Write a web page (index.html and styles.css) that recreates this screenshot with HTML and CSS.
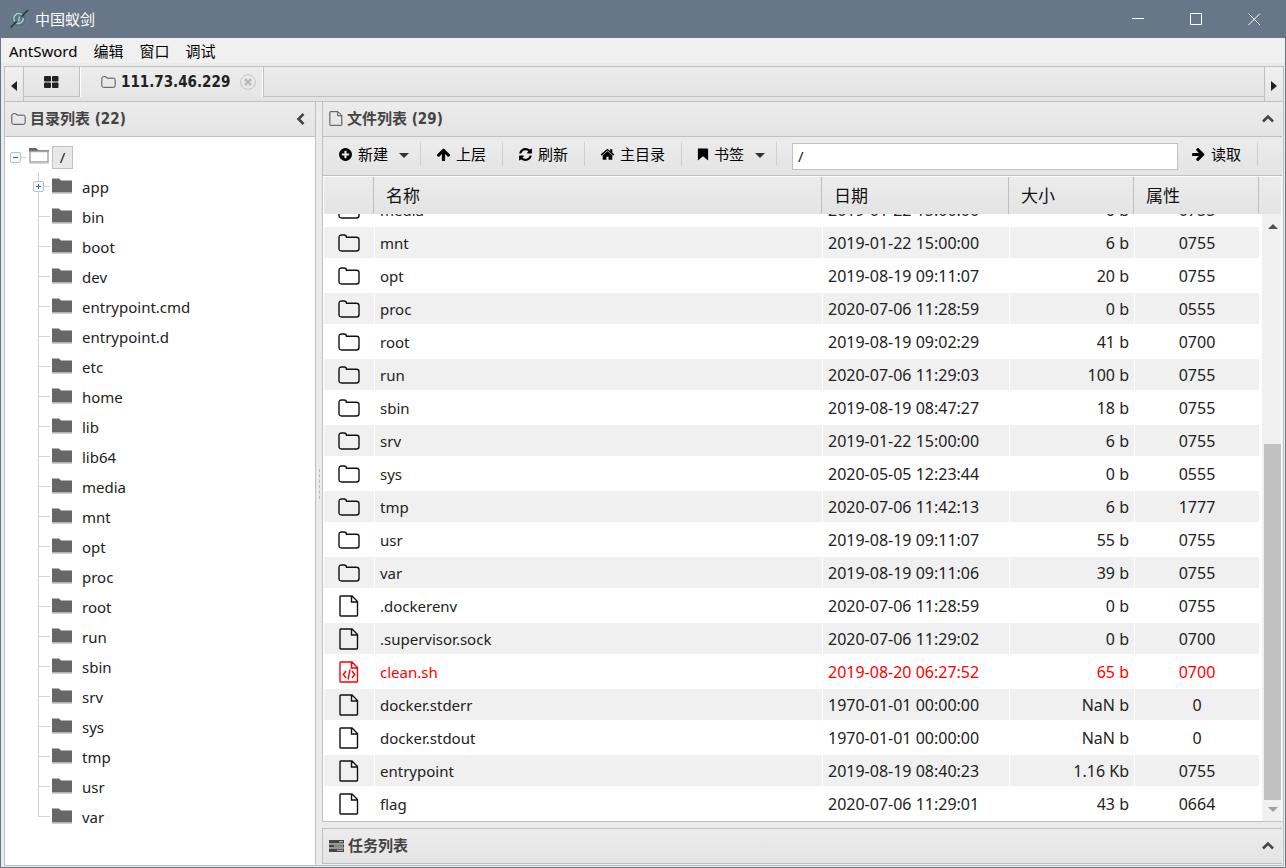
FILE: index.html
```html
<!DOCTYPE html>
<html lang="zh-CN">
<head>
<meta charset="utf-8">
<meta name="viewport" content="width=device-width, initial-scale=1">
<title>中国蚁剑</title>
<link rel="stylesheet" href="styles.css">
</head>
<body>
<svg class="sprite" aria-hidden="true">
  <symbol id="folder-o" viewBox="0 0 22 18"><path d="M1 3.500Q1 1 3.500 1H6Q8.500 1 8.500 3.200H18.500Q21 3.200 21 5.700V14.500Q21 17 18.500 17H3.500Q1 17 1 14.500Z" fill="none" stroke="currentColor" stroke-width="1.400"/></symbol>
  <symbol id="file-o" viewBox="0 0 20 22"><path d="M1.700 1H13L18.500 6.500V20.300Q18.500 21 17.800 21H1.700Q1 21 1 20.300V1.700Q1 1 1.700 1ZM12.500 1V7H18.500" fill="none" stroke="currentColor" stroke-width="1.400"/></symbol>
  <symbol id="file-code" viewBox="0 0 20 22"><path d="M1.700 1H13L18.500 6.500V20.300Q18.500 21 17.800 21H1.700Q1 21 1 20.300V1.700Q1 1 1.700 1ZM12.500 1V7H18.500M7 10L4.300 13.500L7 17M13 10L15.700 13.500L13 17M11 8.500L9 18.500" fill="none" stroke="currentColor" stroke-width="1.400"/></symbol>
  <symbol id="folder" viewBox="0 0 20 16"><path d="M0 0.500H7L9 2.500H20V14.500H0Z" fill="#666"/><path d="M0 15.500H20" stroke="#d0d0d0"/></symbol>
  <symbol id="folder-open" viewBox="0 0 20 16"><path d="M0 0H7L9 2H20V4H0Z" fill="#888"/><path d="M0 0H7L9 2V4H0Z" fill="#666"/><path d="M1 3.500H19V14H1Z" fill="#fff" stroke="#a6a6a6" stroke-width="1.500"/><path d="M0 15.500H20" stroke="#ddd"/></symbol>
  <symbol id="plus-circle" viewBox="0 0 1792 1792"><path fill="currentColor" d="M1344 960v-128q0-26-19-45t-45-19h-256v-256q0-26-19-45t-45-19h-128q-26 0-45 19t-19 45v256h-256q-26 0-45 19t-19 45v128q0 26 19 45t45 19h256v256q0 26 19 45t45 19h128q26 0 45-19t19-45v-256h256q26 0 45-19t19-45zm320-64q0 209-103 385.500t-279.500 279.500-385.500 103-385.500-103-279.500-279.500-103-385.500 103-385.500 279.500-279.500 385.500-103 385.500 103 279.500 279.500 103 385.500z"/></symbol>
  <symbol id="arrow-up" viewBox="0 0 1792 1792"><path fill="currentColor" d="M1675 971q0 51-37 90l-75 75q-38 38-91 38-54 0-90-38l-294-293v704q0 52-37.500 84.500t-90.500 32.500h-128q-53 0-90.500-32.500t-37.500-84.500v-704l-294 293q-36 38-90 38t-90-38l-75-75q-38-38-38-90 0-53 38-91l651-651q35-37 90-37 54 0 91 37l651 651q37 39 37 91z"/></symbol>
  <symbol id="arrow-right" viewBox="0 0 1792 1792"><path fill="currentColor" transform="rotate(90 896 896)" d="M1675 971q0 51-37 90l-75 75q-38 38-91 38-54 0-90-38l-294-293v704q0 52-37.500 84.500t-90.500 32.500h-128q-53 0-90.500-32.500t-37.500-84.500v-704l-294 293q-36 38-90 38t-90-38l-75-75q-38-38-38-90 0-53 38-91l651-651q35-37 90-37 54 0 91 37l651 651q37 39 37 91z"/></symbol>
  <symbol id="refresh" viewBox="0 0 1792 1792"><path fill="currentColor" d="M1639 1056q0 5-1 7-64 268-268 434.500t-478 166.500q-146 0-282.500-55t-243.500-157l-129 129q-19 19-45 19t-45-19-19-45v-448q0-26 19-45t45-19h448q26 0 45 19t19 45-19 45l-137 137q71 66 161 102t187 36q134 0 250-65t186-179q11-17 53-117 8-23 30-23h192q13 0 22.500 9.500t9.500 22.500zm25-800v448q0 26-19 45t-45 19h-448q-26 0-45-19t-19-45 19-45l138-138q-148-137-349-137-134 0-250 65t-186 179q-11 17-53 117-8 23-30 23h-199q-13 0-22.500-9.500t-9.500-22.500v-7q65-268 270-434.500t480-166.500q146 0 284 55.500t245 156.500l130-129q19-19 45-19t45 19 19 45z"/></symbol>
  <symbol id="home" viewBox="0 0 1792 1792"><path fill="currentColor" d="M1472 992v480q0 26-19 45t-45 19h-384v-384h-256v384h-384q-26 0-45-19t-19-45v-480q0-1 .5-3t.5-3l575-474 575 474q1 2 1 6zm223-69l-62 74q-8 9-21 11h-3q-13 0-21-7l-692-577-692 577q-12 8-24 7-13-2-21-11l-62-74q-8-10-7-23.500t11-21.500l719-599q32-26 76-26t76 26l244 204v-195q0-14 9-23t23-9h192q14 0 23 9t9 23v408l219 182q10 8 11 21.500t-7 23.500z"/></symbol>
  <symbol id="bookmark" viewBox="0 0 12 14"><path fill="currentColor" d="M1 0.500H10.500Q11.500 0.500 11.500 1.500V13.500L6 9L0.500 13.500V1.500Q0.500 0.500 1 0.500Z"/></symbol>
  <symbol id="caret-down" viewBox="0 0 10 5"><path fill="currentColor" d="M0 0H10L5 5Z"/></symbol>
  <symbol id="caret-left" viewBox="0 0 6 10"><path fill="currentColor" d="M6 0V10L0 5Z"/></symbol>
  <symbol id="caret-right" viewBox="0 0 6 10"><path fill="currentColor" d="M0 0V10L6 5Z"/></symbol>
  <symbol id="chevron-up" viewBox="0 0 12 12"><path d="M1 8.500L6 3.500L11 8.500" fill="none" stroke="currentColor" stroke-width="2.600"/></symbol>
  <symbol id="chevron-left" viewBox="0 0 12 12"><path d="M8.500 1L3.500 6L8.500 11" fill="none" stroke="currentColor" stroke-width="2.600"/></symbol>
</svg>
<div class="window">
  <header class="titlebar">
    <svg class="logo" viewBox="0 0 20 20" aria-hidden="true"><circle cx="10" cy="10" r="8.500" fill="#567481" stroke="#6c8894"/><path d="M13.500 6.500A4.800 4.800 0 1 0 6.500 13M7.500 14.200A5 5 0 0 0 14.200 9M10.500 7.500L9.500 12.500" fill="none" stroke="#b4c4c9" stroke-width="1.500"/><path d="M19 1L12.500 7.500M7.500 12.500L1.500 18.500" stroke="#2a3238" stroke-width="1.600"/></svg>
    <h1 class="title">中国蚁剑</h1>
    <button class="winbtn" aria-label="最小化"><svg viewBox="0 0 13 13"><path d="M0 5.500H12"/></svg></button>
    <button class="winbtn" aria-label="最大化"><svg viewBox="0 0 13 13"><path d="M0.500 0.500H11.500V11.500H0.500Z"/></svg></button>
    <button class="winbtn" aria-label="关闭"><svg viewBox="0 0 13 13"><path d="M0.500 0.500L12 12M12 0.500L0.500 12"/></svg></button>
  </header>
  <nav class="menubar">
    <button>AntSword</button><button>编辑</button><button>窗口</button><button>调试</button>
  </nav>
  <div class="frame">
    <div class="tabbar">
      <button class="tabarrow prev" aria-label="向左"><svg><use href="#caret-left"/></svg></button>
      <div class="tabs">
        <button class="tab hometab" aria-label="主页"><svg viewBox="0 0 15 12"><path fill="#222" d="M1 0H6Q7 0 7 1V4.500Q7 5.500 6 5.500H1Q0 5.500 0 4.500V1Q0 0 1 0ZM9 0H13.500Q14.500 0 14.500 1V4.500Q14.500 5.500 13.500 5.500H9Q8 5.500 8 4.500V1Q8 0 9 0ZM1 6.500H6Q7 6.500 7 7.500V11Q7 12 6 12H1Q0 12 0 11V7.500Q0 6.500 1 6.500ZM9 6.500H13.500Q14.500 6.500 14.500 7.500V11Q14.500 12 13.500 12H9Q8 12 8 11V7.500Q8 6.500 9 6.500Z"/></svg></button>
        <div class="tab active">
          <svg class="small-folder"><use href="#folder-o"/></svg>
          <span class="tabname">111.73.46.229</span>
          <button class="close" aria-label="关闭标签"><svg viewBox="0 0 16 16"><circle cx="8" cy="8" r="7.400" fill="none" stroke="#c4c4c4"/><path d="M5 5L11 11M11 5L5 11" stroke="#bdbdbd" stroke-width="2.600"/></svg></button>
        </div>
      </div>
      <button class="tabarrow next" aria-label="向右"><svg><use href="#caret-right"/></svg></button>
    </div>
    <main class="content">
      <aside class="sidebar">
        <div class="panelhead">
          <svg class="small-folder"><use href="#folder-o"/></svg>
          <h2>目录列表 (22)</h2>
          <button class="fold" aria-label="折叠目录"><svg><use href="#chevron-left"/></svg></button>
        </div>
        <div class="tree">
          <div class="node root"><button class="toggle" aria-label="收起"></button><svg class="fold-icon"><use href="#folder-open"/></svg><span class="label">/</span></div>
          <ul>
            <li class="node"><button class="toggle plus" aria-label="展开"></button><svg class="fold-icon"><use href="#folder"/></svg><span>app</span></li>
            <li class="node"><svg class="fold-icon"><use href="#folder"/></svg><span>bin</span></li>
            <li class="node"><svg class="fold-icon"><use href="#folder"/></svg><span>boot</span></li>
            <li class="node"><svg class="fold-icon"><use href="#folder"/></svg><span>dev</span></li>
            <li class="node"><svg class="fold-icon"><use href="#folder"/></svg><span>entrypoint.cmd</span></li>
            <li class="node"><svg class="fold-icon"><use href="#folder"/></svg><span>entrypoint.d</span></li>
            <li class="node"><svg class="fold-icon"><use href="#folder"/></svg><span>etc</span></li>
            <li class="node"><svg class="fold-icon"><use href="#folder"/></svg><span>home</span></li>
            <li class="node"><svg class="fold-icon"><use href="#folder"/></svg><span>lib</span></li>
            <li class="node"><svg class="fold-icon"><use href="#folder"/></svg><span>lib64</span></li>
            <li class="node"><svg class="fold-icon"><use href="#folder"/></svg><span>media</span></li>
            <li class="node"><svg class="fold-icon"><use href="#folder"/></svg><span>mnt</span></li>
            <li class="node"><svg class="fold-icon"><use href="#folder"/></svg><span>opt</span></li>
            <li class="node"><svg class="fold-icon"><use href="#folder"/></svg><span>proc</span></li>
            <li class="node"><svg class="fold-icon"><use href="#folder"/></svg><span>root</span></li>
            <li class="node"><svg class="fold-icon"><use href="#folder"/></svg><span>run</span></li>
            <li class="node"><svg class="fold-icon"><use href="#folder"/></svg><span>sbin</span></li>
            <li class="node"><svg class="fold-icon"><use href="#folder"/></svg><span>srv</span></li>
            <li class="node"><svg class="fold-icon"><use href="#folder"/></svg><span>sys</span></li>
            <li class="node"><svg class="fold-icon"><use href="#folder"/></svg><span>tmp</span></li>
            <li class="node"><svg class="fold-icon"><use href="#folder"/></svg><span>usr</span></li>
            <li class="node"><svg class="fold-icon"><use href="#folder"/></svg><span>var</span></li>
          </ul>
        </div>
      </aside>
      <div class="splitter"><span></span></div>
      <div class="right">
        <section class="files">
          <div class="panelhead">
            <svg class="small-file"><use href="#file-o"/></svg>
            <h2>文件列表 (29)</h2>
            <button class="fold" aria-label="折叠文件"><svg><use href="#chevron-up"/></svg></button>
          </div>
          <div class="toolbar">
            <button class="tool"><svg><use href="#plus-circle"/></svg>新建<svg class="caret"><use href="#caret-down"/></svg></button>
            <button class="tool"><svg><use href="#arrow-up"/></svg>上层</button>
            <button class="tool"><svg><use href="#refresh"/></svg>刷新</button>
            <button class="tool"><svg><use href="#home"/></svg>主目录</button>
            <button class="tool"><svg class="mark"><use href="#bookmark"/></svg>书签<svg class="caret"><use href="#caret-down"/></svg></button>
            <input class="path" type="text" value="/" aria-label="路径">
            <button class="tool"><svg><use href="#arrow-right"/></svg>读取</button>
          </div>
          <div class="gridhead">
            <table>
              <colgroup><col class="c-icon"><col><col class="c-date"><col class="c-size"><col class="c-attr"></colgroup>
              <thead><tr><th></th><th>名称</th><th>日期</th><th>大小</th><th>属性</th></tr></thead>
            </table>
          </div>
          <div class="gridbody">
            <div class="rows">
              <table>
                <colgroup><col class="c-icon"><col><col class="c-date"><col class="c-size"><col class="c-attr"></colgroup>
                <tbody>
                  <tr><td><svg class="dir"><use href="#folder-o"/></svg></td><td>media</td><td>2019-01-22 15:00:00</td><td>6 b</td><td>0755</td></tr>
                  <tr><td><svg class="dir"><use href="#folder-o"/></svg></td><td>mnt</td><td>2019-01-22 15:00:00</td><td>6 b</td><td>0755</td></tr>
                  <tr><td><svg class="dir"><use href="#folder-o"/></svg></td><td>opt</td><td>2019-08-19 09:11:07</td><td>20 b</td><td>0755</td></tr>
                  <tr><td><svg class="dir"><use href="#folder-o"/></svg></td><td>proc</td><td>2020-07-06 11:28:59</td><td>0 b</td><td>0555</td></tr>
                  <tr><td><svg class="dir"><use href="#folder-o"/></svg></td><td>root</td><td>2019-08-19 09:02:29</td><td>41 b</td><td>0700</td></tr>
                  <tr><td><svg class="dir"><use href="#folder-o"/></svg></td><td>run</td><td>2020-07-06 11:29:03</td><td>100 b</td><td>0755</td></tr>
                  <tr><td><svg class="dir"><use href="#folder-o"/></svg></td><td>sbin</td><td>2019-08-19 08:47:27</td><td>18 b</td><td>0755</td></tr>
                  <tr><td><svg class="dir"><use href="#folder-o"/></svg></td><td>srv</td><td>2019-01-22 15:00:00</td><td>6 b</td><td>0755</td></tr>
                  <tr><td><svg class="dir"><use href="#folder-o"/></svg></td><td>sys</td><td>2020-05-05 12:23:44</td><td>0 b</td><td>0555</td></tr>
                  <tr><td><svg class="dir"><use href="#folder-o"/></svg></td><td>tmp</td><td>2020-07-06 11:42:13</td><td>6 b</td><td>1777</td></tr>
                  <tr><td><svg class="dir"><use href="#folder-o"/></svg></td><td>usr</td><td>2019-08-19 09:11:07</td><td>55 b</td><td>0755</td></tr>
                  <tr><td><svg class="dir"><use href="#folder-o"/></svg></td><td>var</td><td>2019-08-19 09:11:06</td><td>39 b</td><td>0755</td></tr>
                  <tr><td><svg class="doc"><use href="#file-o"/></svg></td><td>.dockerenv</td><td>2020-07-06 11:28:59</td><td>0 b</td><td>0755</td></tr>
                  <tr><td><svg class="doc"><use href="#file-o"/></svg></td><td>.supervisor.sock</td><td>2020-07-06 11:29:02</td><td>0 b</td><td>0700</td></tr>
                  <tr class="exec"><td><svg class="doc"><use href="#file-code"/></svg></td><td>clean.sh</td><td>2019-08-20 06:27:52</td><td>65 b</td><td>0700</td></tr>
                  <tr><td><svg class="doc"><use href="#file-o"/></svg></td><td>docker.stderr</td><td>1970-01-01 00:00:00</td><td>NaN b</td><td>0</td></tr>
                  <tr><td><svg class="doc"><use href="#file-o"/></svg></td><td>docker.stdout</td><td>1970-01-01 00:00:00</td><td>NaN b</td><td>0</td></tr>
                  <tr><td><svg class="doc"><use href="#file-o"/></svg></td><td>entrypoint</td><td>2019-08-19 08:40:23</td><td>1.16 Kb</td><td>0755</td></tr>
                  <tr><td><svg class="doc"><use href="#file-o"/></svg></td><td>flag</td><td>2020-07-06 11:29:01</td><td>43 b</td><td>0664</td></tr>
                </tbody>
              </table>
            </div>
            <div class="scrollbar" aria-hidden="true">
              <svg class="up" viewBox="0 0 10 5"><path d="M0 5H10L5 0Z"/></svg>
              <div class="track"><div class="thumb"></div></div>
              <svg class="down" viewBox="0 0 10 5"><path d="M0 0H10L5 5Z"/></svg>
            </div>
          </div>
        </section>
        <section class="tasks">
          <div class="panelhead">
            <svg class="tasks-icon" viewBox="0 0 15 12"><path d="M0 0H15V3.500H0ZM0 4.500H15V7.500H0ZM0 8.500H15V12H0Z" fill="#444"/><path d="M10 1.200H14V2.300H10ZM5 5.500H14V6.500H5ZM8 9.700H14V10.800H8Z" fill="#ccc"/></svg>
            <h2>任务列表</h2>
            <button class="fold" aria-label="展开任务"><svg><use href="#chevron-up"/></svg></button>
          </div>
        </section>
      </div>
    </main>
  </div>
</div>
</body>
</html>
```
FILE: styles.css
```css
* { box-sizing: border-box; }
body {
  margin: 0;
  font-family: "Noto Sans", "Noto Sans CJK SC", sans-serif;
  font-size: 16px;
  color: #222;
}
button { margin: 0; padding: 0; border: 0; background: none; font: inherit; color: inherit; }
svg { display: block; flex: none; }
h1, h2 { margin: 0; }
.sprite { position: absolute; width: 0; height: 0; }
.window {
  display: flex;
  flex-direction: column;
  min-height: 100vh;
  border: 1px solid #687689;
  border-top: 0;
  background: #ebebeb;
}
.titlebar { display: flex; align-items: center; height: 38px; padding: 0 2px 0 8px; background: #687689; color: #fff; }
.logo { width: 20px; height: 20px; }
.title { flex: 1; margin-left: 6px; font-size: 15px; font-weight: 400; line-height: 20px; }
.winbtn { display: grid; place-items: center; width: 58px; height: 38px; }
.winbtn svg { width: 13px; height: 13px; fill: none; stroke: #fff; }
.menubar { display: flex; gap: 16px; height: 25px; padding-left: 8px; background: #f0f0f0; color: #000; font-size: 15px; line-height: 26px; }
.frame { display: flex; flex-direction: column; flex: 1; margin: 3px 1px 1px 3px; border: 1px solid #c0c0c0; }

.tabbar { display: flex; height: 35px; border-bottom: 1px solid #c0c0c0; background: #e4e4e4; }
.tabarrow { display: flex; align-items: center; justify-content: center; flex: none; width: 19px; padding-top: 3px; background: linear-gradient(#f0f0f0, #e6e6e6); color: #222; }
.tabarrow svg { width: 6px; height: 10px; }
.tabarrow.prev { border-right: 1px solid #c0c0c0; }
.tabarrow.next { border-left: 1px solid #c0c0c0; }
.tabs { display: flex; flex: 1; height: 30px; border-bottom: 1px solid #c0c0c0; background: linear-gradient(#ececec, #e4e4e4); }
.tab { display: flex; align-items: center; height: 29px; border-right: 1px solid #c0c0c0; }
.hometab { justify-content: center; width: 56px; }
.hometab svg { width: 15px; height: 12px; }
.tab.active { height: 30px; padding: 0 7px 0 20px; border-left: 1px solid #fff; box-shadow: inset -1px 0 #fff; background: linear-gradient(#ececec, #e6e6e6); font-weight: 700; }
.small-folder { width: 15px; height: 12px; color: #444; }
.tabname { margin: 0 10px 0 5px; font-family: "DejaVu Sans Condensed", "DejaVu Sans", sans-serif; font-size: 15px; }
.close svg { width: 16px; height: 16px; }

.content { display: flex; flex: 1; }
.sidebar { display: flex; flex-direction: column; flex: none; width: 311px; border-right: 1px solid #c0c0c0; background: #fff; }
.panelhead { display: flex; align-items: center; height: 35px; padding: 0 8px 1px 6px; border-bottom: 1px solid #c0c0c0; background: linear-gradient(#ececec, #e4e4e4); color: #444; }
.panelhead h2 { flex: 1; margin-left: 4px; font-family: "DejaVu Sans Condensed", "Noto Sans CJK SC", sans-serif; font-size: 15px; font-weight: 700; line-height: 20px; }
.small-file { width: 14px; height: 15px; }
.fold svg { width: 12px; height: 12px; }
.tree { padding: 5px 0 0 5px; font-size: 15px; }
.node { display: flex; align-items: center; height: 30px; }
.toggle { position: relative; width: 11px; height: 11px; border: 1px solid #b4c4ce; border-radius: 2px; background: #f4f8fa; }
.toggle::before { content: ""; position: absolute; left: 2px; top: 4px; width: 5px; height: 1px; background: #3a6a80; }
.toggle.plus::after { content: ""; position: absolute; left: 4px; top: 2px; width: 1px; height: 5px; background: #3a6a80; }
.root::after { content: ""; order: 1; width: 5px; height: 1px; background: #d4d4d4; }
.root .fold-icon { order: 2; margin-left: 3px; }
.label { display: grid; order: 3; place-items: center; width: 21px; height: 23px; margin-left: 3px; border: 1px solid #c0c0c0; background: #e8e8e8; }
.fold-icon { width: 20px; height: 16px; margin-bottom: 2px; }
.tree ul { margin: 0; padding: 0 0 0 23px; list-style: none; }
.tree li { position: relative; padding-left: 19px; }
.tree li span { margin-left: 10px; }
.tree li::before { content: ""; position: absolute; left: 5px; top: 0; width: 1px; height: 30px; background: #d4d4d4; }
.tree li:last-child::before { height: 15px; }
.tree li::after { content: ""; position: absolute; left: 5px; top: 14px; width: 12px; height: 1px; background: #d4d4d4; }
.tree li .toggle { position: absolute; left: 0; top: 9px; z-index: 1; }
.splitter { display: grid; place-items: center; flex: none; width: 6px; }
.splitter span { height: 30px; border-left: 1px dashed #bbb; }

.right { display: flex; flex-direction: column; flex: 1; gap: 6px; min-width: 0; padding: 0 1px 1px 0; }
.files { display: flex; flex-direction: column; flex: 1; border-left: 1px solid #c0c0c0; border-bottom: 1px solid #c0c0c0; background: #fff; }
.toolbar { display: flex; align-items: center; height: 39px; padding: 0 24px 4px 0; border-bottom: 1px solid #c0c0c0; background: linear-gradient(#ececec, #e4e4e4); color: #000; font-size: 15px; }
.tool { display: flex; align-items: center; gap: 5px; height: 24px; padding: 0 16px 0 15px; border-right: 1px solid #c5d3da; line-height: 20px; white-space: nowrap; }
.tool svg { width: 15px; height: 15px; }
.tool .mark { width: 12px; height: 13px; }
.tool .caret { width: 10px; height: 5px; margin: 2px -5px 0 6px; color: #333; }
.path { flex: 1; min-width: 0; height: 27px; margin: 4px 0 0 15px; padding: 0 5px; border: 1px solid #c0c0c0; background: #fff; color: #222; font: inherit; }
.path + .tool { padding-left: 13px; }

table { width: 100%; border-collapse: separate; border-spacing: 0; table-layout: fixed; }
.c-icon { width: 50px; }
.c-date { width: 187px; }
.c-size, .c-attr { width: 125px; }
.gridhead { margin: 1px 1px 0; padding-right: 22px; background: linear-gradient(#ececec, #e4e4e4); }
th { height: 37px; padding: 0 12px; border-right: 1px solid #c0c0c0; color: #111; font-size: 17px; font-weight: 400; text-align: left; line-height: 22px; }
.gridbody { display: flex; flex: 1; margin: 0 1px 0 1px; }
.rows { display: flex; flex-direction: column; justify-content: flex-end; flex: 1; height: 606px; overflow: hidden; }
td { height: 33px; padding: 0 5px; border: 1px solid #fff; border-width: 1px 0 1px 1px; line-height: 20px; white-space: nowrap; }
td:first-child { border-left: 0; }
td:nth-child(2) { font-size: 15px; }
td svg { margin: 0 auto; color: #111; }
tr:nth-child(even) td { background: #f0f0f0; }
td:nth-child(4) { text-align: right; }
td:nth-child(5) { text-align: center; }
.exec td, .exec svg { color: #f00; }
.dir { width: 22px; height: 18px; }
.doc { width: 20px; height: 22px; }
.scrollbar { display: flex; flex-direction: column; width: 19px; margin-left: 3px; padding: 10px 0 9px 2px; background: #f0f0f0; }
.scrollbar svg { width: 10px; height: 5px; margin: 0 auto; fill: #505050; }
.scrollbar .down { fill: #a0a0a0; }
.track { display: flex; flex-direction: column; justify-content: flex-end; flex: 1; padding: 6px 0 7px; }
.thumb { height: 63%; background: #c1c1c1; }
.tasks { border: 1px solid #c0c0c0; border-right: 0; }
.tasks .panelhead { height: 34px; border-bottom: 0; }
.tasks-icon { width: 15px; height: 12px; }
```
